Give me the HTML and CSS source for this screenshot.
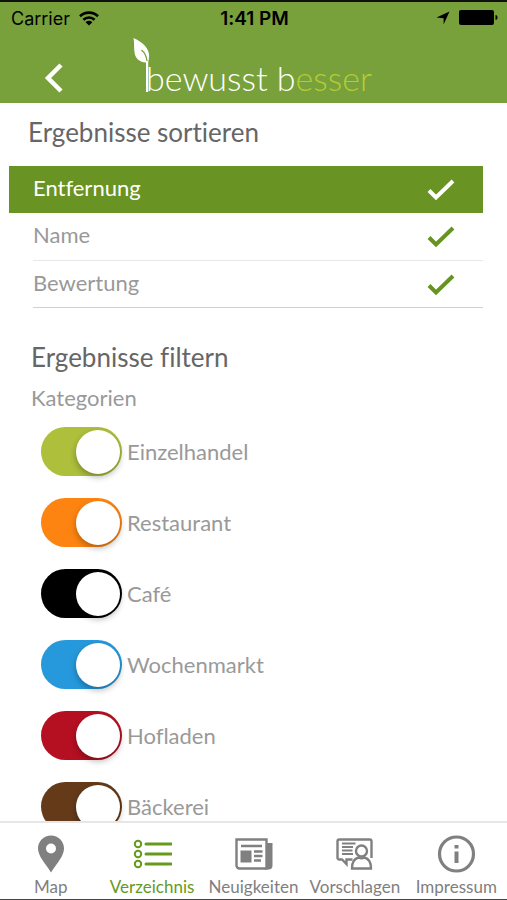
FILE: index.html
```html
<!DOCTYPE html>
<html lang="de">
<head>
<meta charset="UTF-8">
<meta name="viewport" content="width=device-width, initial-scale=1.0">
<title>bewusst besser</title>
<link rel="stylesheet" href="styles.css">
</head>
<body>

<!-- Header -->
<header class="header">
  <div class="status-bar">
    <div class="carrier">
      <span>Carrier</span>
      <svg width="20" height="15" viewBox="0 0 20 15" fill="none" stroke="#000" stroke-width="2.6">
        <path d="M1 5.2C6 .4 14 .4 19 5.2"/>
        <path d="M4.4 8.7c3.2-3 8-3 11.2 0"/>
        <path d="M10 14.6L6.6 11.2c2-1.8 4.8-1.8 6.8 0z" fill="#000" stroke="none"/>
      </svg>
    </div>
    <span class="time">1:41 PM</span>
    <div class="battery">
      <svg width="14" height="14" viewBox="0 0 14 14"><path d="M13.5.5L7.6 13.5V7.2L.5 6.6z"/></svg>
      <svg width="39" height="16" viewBox="0 0 39 16"><rect x="0" y="0" width="35" height="15" rx="2"/><path d="M36.5 5c1.4 0 2 1.2 2 2.5s-.6 2.5-2 2.5z"/></svg>
    </div>
  </div>
  <div class="title-bar">
    <button class="back-button" type="button" aria-label="Zurück">
      <svg width="20" height="30" viewBox="0 0 20 30" fill="none" stroke="#fff" stroke-width="4.5"><path d="M17 2L4 15l13 13"/></svg>
    </button>
    <h1 class="logo">
      <svg class="leaf" width="18" height="56" viewBox="0 0 18 56">
        <path d="M.5 0C1.5 5 .8 10 1.6 15c.8 5.500 5 9.200 11.400 9.500V54h2.200V24C18.500 13 13 6 .5 0z" fill="#fff"/>
        <path d="M8.500 12c3 2.500 5 6 5.500 11" fill="none" stroke="#78a13b" stroke-width="1.3"/>
      </svg>
      <span>bewusst b<span class="logo-accent">esser</span></span>
    </h1>
  </div>
</header>

<main class="content">
  <!-- Sorting -->
  <section class="sort">
    <h2>Ergebnisse sortieren</h2>
    <div class="sort-list">
      <button class="sort-item active" type="button">
        <span>Entfernung</span>
        <svg width="28" height="22" viewBox="0 0 28 22"><path d="M2 11.5l7 7L26 2"/></svg>
      </button>
      <button class="sort-item" type="button">
        <span>Name</span>
        <svg width="28" height="22" viewBox="0 0 28 22"><path d="M2 11.5l7 7L26 2"/></svg>
      </button>
      <button class="sort-item last" type="button">
        <span>Bewertung</span>
        <svg width="28" height="22" viewBox="0 0 28 22"><path d="M2 11.5l7 7L26 2"/></svg>
      </button>
    </div>
  </section>

  <!-- Filters -->
  <section class="filter">
    <h2>Ergebnisse filtern</h2>
    <h3>Kategorien</h3>
    <div class="switch-list">
      <label class="switch"><input class="retail" type="checkbox" checked>Einzelhandel</label>
      <label class="switch"><input class="restaurant" type="checkbox" checked>Restaurant</label>
      <label class="switch"><input class="cafe" type="checkbox" checked>Café</label>
      <label class="switch"><input class="market" type="checkbox" checked>Wochenmarkt</label>
      <label class="switch"><input class="farm" type="checkbox" checked>Hofladen</label>
      <label class="switch"><input class="bakery" type="checkbox" checked>Bäckerei</label>
    </div>
  </section>
</main>

<!-- Tab bar -->
<nav class="tab-bar">
  <a href="#map" class="tab">
    <svg width="40" height="40" viewBox="0 0 40 40">
      <path d="M20 1.5c-7.200 0-13 5.800-13 13C7 22 14 29 20 38.5 26 29 33 22 33 14.500c0-7.200-5.800-13-13-13zm0 8a5 5 0 1 1 0 10 5 5 0 0 1 0-10z" fill="currentColor" fill-rule="evenodd"/>
    </svg>
    <span>Map</span>
  </a>
  <a href="#verzeichnis" class="tab active">
    <svg width="40" height="40" viewBox="0 0 40 40" fill="none" stroke="currentColor" stroke-width="2">
      <circle cx="6" cy="10" r="3.2"/><circle cx="6" cy="20" r="3.2"/><circle cx="6" cy="30" r="3.2"/>
      <path d="M14 10h25M14 20h25M14 30h25" stroke-width="3" stroke-linecap="round"/>
    </svg>
    <span>Verzeichnis</span>
  </a>
  <a href="#neuigkeiten" class="tab">
    <svg width="40" height="40" viewBox="0 0 40 40" fill="none" stroke="currentColor" stroke-width="2.4">
      <path d="M3.5 5.5h30v29h-27a3 3 0 0 1-3-3z"/>
      <path d="M34 9h5.500v22.500a4 4 0 0 1-4 4H31L34 33z" fill="currentColor" stroke="none"/>
      <path d="M8 12h21M21 17.500h8.500M21 22h8.500M21 26.500h7"/>
      <path d="M7.500 16.500h11v12h-11z" fill="currentColor" stroke="none"/>
    </svg>
    <span>Neuigkeiten</span>
  </a>
  <a href="#vorschlagen" class="tab">
    <svg width="40" height="40" viewBox="0 0 40 40" fill="none" stroke="currentColor" stroke-width="2.4">
      <path d="M36.500 24V7.300a1.800 1.800 0 0 0-1.800-1.800H4.300a1.800 1.800 0 0 0-1.800 1.800v16.400a1.800 1.800 0 0 0 1.800 1.800H7l4.500 4.500v-4.500h6"/>
      <path d="M7 9.500h13.500M7 13h11M7 16.500h10.500M7 20h11" stroke-width="1.8"/>
      <circle cx="26.500" cy="17" r="5.500"/>
      <path d="M17 34.500c0-6 2.500-10 6.500-11 2 1.200 4 1.200 6 0 4 1 6.500 5 6.500 11z"/>
    </svg>
    <span>Vorschlagen</span>
  </a>
  <a href="#impressum" class="tab">
    <svg width="40" height="40" viewBox="0 0 40 40">
      <circle cx="20.500" cy="20" r="17" fill="none" stroke="currentColor" stroke-width="3.2"/>
      <path d="M18.500 11h4v3.600h-4zM18.500 17.500h4V29h-4z" fill="currentColor"/>
    </svg>
    <span>Impressum</span>
  </a>
</nav>

</body>
</html>
```
FILE: styles.css
```css
* {
  box-sizing: border-box;
}

body {
  margin: 0;
  height: 100vh;
  display: flex;
  flex-direction: column;
  font-family: Lato, sans-serif;
  font-variant-ligatures: none;
  color: #999;
  background-color: #fff;
}

button {
  border: none;
  background: none;
  font: inherit;
  color: inherit;
  cursor: pointer;
}

/* Header */
.header {
  background-color: #78a13b;
  border-top: 2px solid #111;
}

.status-bar {
  display: grid;
  grid-template-columns: 1fr auto 1fr;
  align-items: center;
  height: 32px;
  padding: 0 9px 0 11px;
  font-family: Inter, sans-serif;
  font-size: 18px;
  color: #000;
}

.carrier,
.battery {
  display: flex;
  align-items: center;
  gap: 9px;
}

.battery {
  justify-content: flex-end;
}

.time {
  font-size: 19px;
  font-weight: 600;
}

.title-bar {
  display: flex;
  align-items: flex-start;
  height: 69px;
  padding: 4px 44px 0;
}

.back-button {
  padding: 24px 0 0;
  height: 58px;
}

.logo {
  display: flex;
  margin: 0 0 0 69px;
  font-size: 34px;
  font-weight: 300;
  line-height: 40px;
  color: #fff;
}

.logo > span {
  margin: 20px 0 0 -5px;
}

.logo-accent {
  color: #b5cc35;
}

/* Content */
.content {
  flex: 1;
  min-height: 0;
  overflow: hidden;
}

h2,
h3 {
  margin: 0;
  font-weight: normal;
}

h2 {
  font-size: 26px;
  line-height: 32px;
  color: #666;
}

h3 {
  font-size: 22px;
  line-height: 28px;
}

.sort {
  padding: 13px 24px 0 9px;
}

.sort h2 {
  padding-left: 19px;
}

.sort-list {
  margin-top: 18px;
}

.sort-item {
  display: flex;
  justify-content: space-between;
  align-items: center;
  width: calc(100% - 24px);
  height: 48px;
  margin-left: 24px;
  padding: 0 28px 4px 0;
  border-bottom: 1px solid #e8e8e8;
  font-size: 22px;
}

.sort-item.active {
  width: 100%;
  height: 47px;
  margin-left: 0;
  padding-left: 24px;
  border-bottom: none;
  background-color: #699322;
  color: #fff;
}

.sort-item.last {
  height: 47px;
  border-bottom-color: #d2d2d2;
}

.sort-item svg {
  margin-top: 5px;
  fill: none;
  stroke: #669420;
  stroke-width: 4;
}

.sort-item.active svg {
  stroke: #fff;
}

.filter {
  padding: 33px 24px 0 31px;
}

.filter h3 {
  margin-top: 11px;
}

/* Switches */
.switch-list {
  display: flex;
  flex-direction: column;
  gap: 22px;
  padding: 15px 0 0 10px;
}

.switch {
  display: flex;
  align-items: center;
  gap: 5px;
  height: 49px;
  font-size: 22px;
  line-height: 28px;
  cursor: pointer;
}

.switch input {
  appearance: none;
  display: flex;
  align-items: center;
  flex-shrink: 0;
  width: 81px;
  height: 49px;
  margin: 0;
  padding: 2px;
  border-radius: 25px;
  background-color: #ccc;
  cursor: pointer;
}

.switch input:checked {
  justify-content: flex-end;
}

.switch input::before {
  content: "";
  width: 44px;
  height: 44px;
  border-radius: 50%;
  background-color: #fff;
  box-shadow: 0 3px 6px rgba(0, 0, 0, 0.3);
}

.switch .retail:checked {
  background-color: #aebf3c;
}

.switch .restaurant:checked {
  background-color: #fd8410;
}

.switch .cafe:checked {
  background-color: #000;
}

.switch .market:checked {
  background-color: #2699dc;
}

.switch .farm:checked {
  background-color: #b51022;
}

.switch .bakery:checked {
  background-color: #643a19;
}

/* Tab bar */
.tab-bar {
  display: grid;
  grid-template-columns: repeat(5, 1fr);
  height: 79px;
  padding-top: 11px;
  border-top: 2px solid #e6e6e6;
  border-bottom: 1px solid #444;
  background-color: #fff;
}

.tab {
  display: flex;
  flex-direction: column;
  align-items: center;
  gap: 2px;
  font-size: 17px;
  line-height: 22px;
  color: #808080;
  text-decoration: none;
}

.tab.active {
  color: #669a1c;
}
```
